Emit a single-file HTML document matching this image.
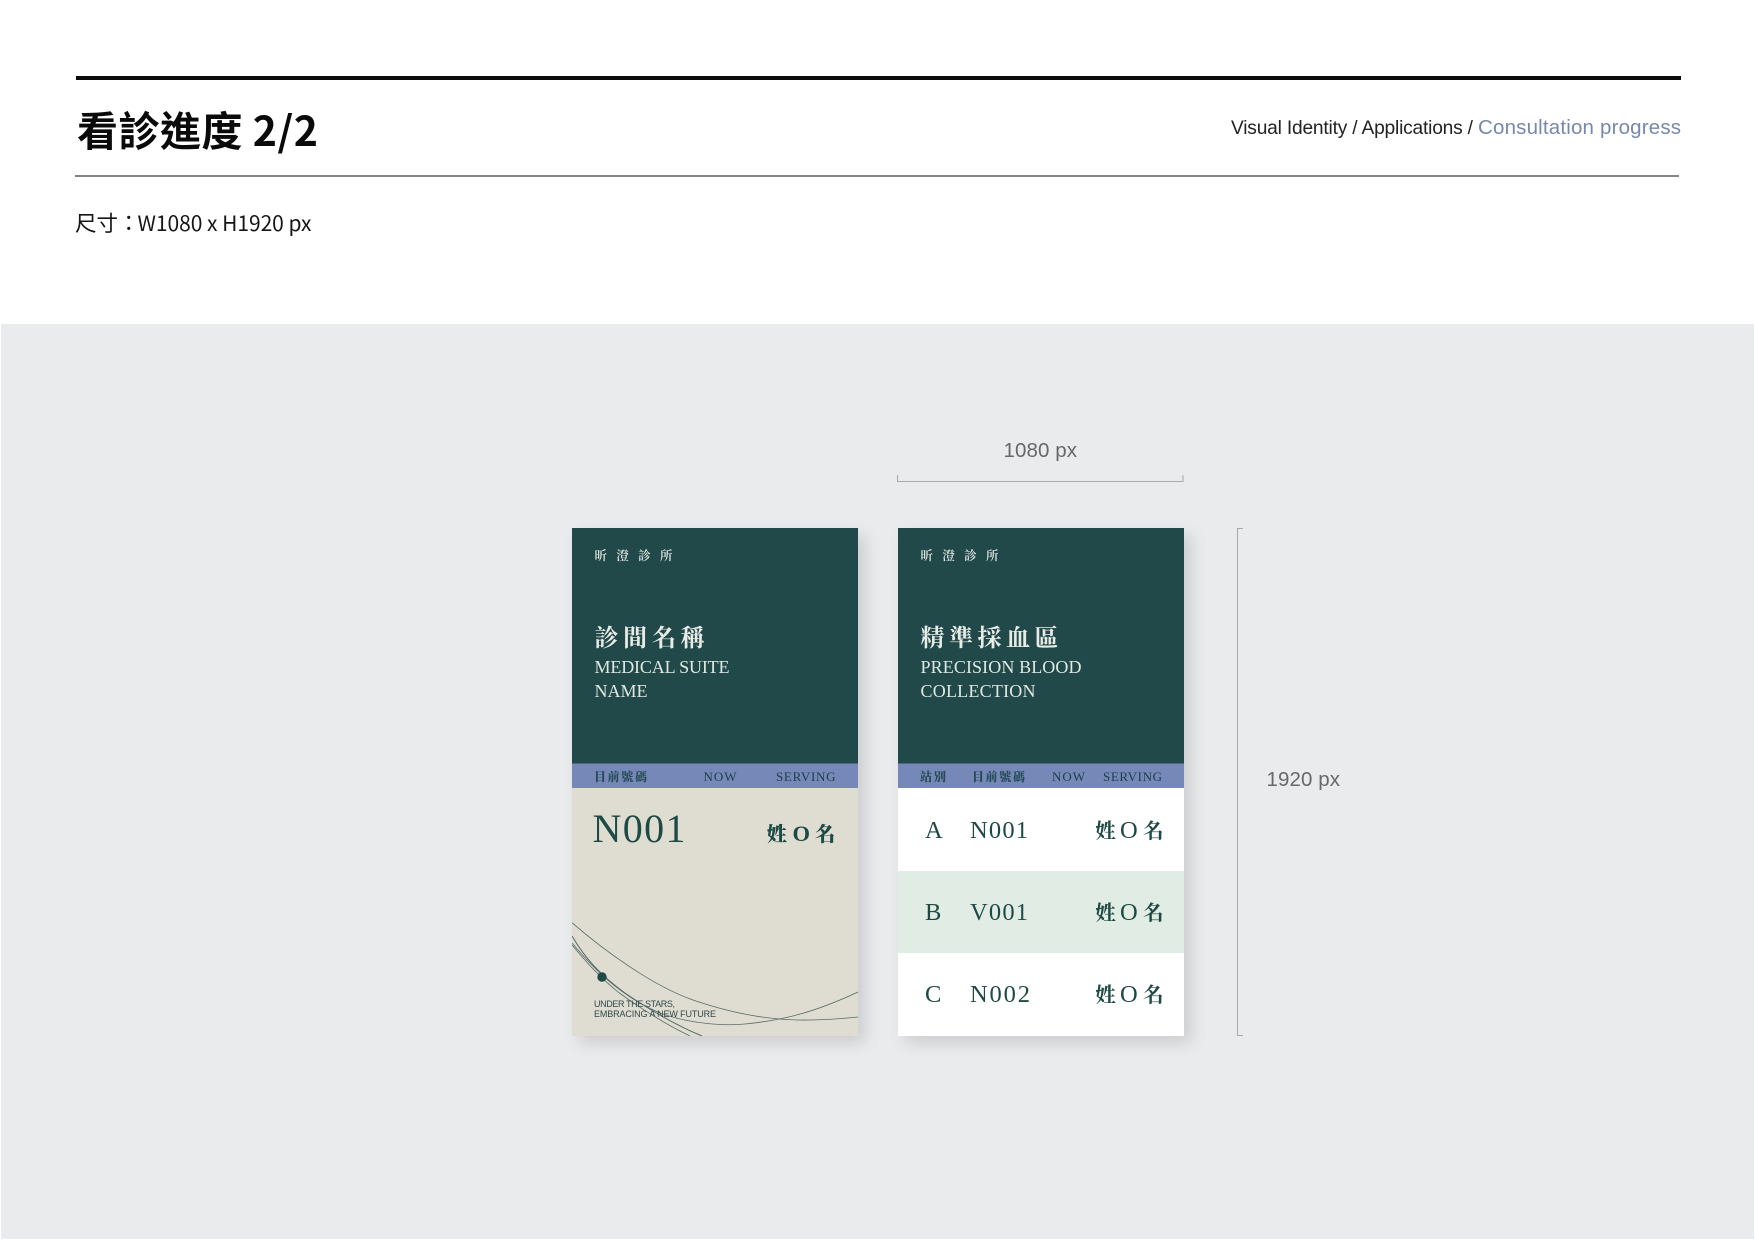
<!DOCTYPE html>
<html lang="zh-Hant"><head><meta charset="utf-8"><title>看診進度 2/2</title>
<style>
html,body{margin:0;padding:0;background:#fff}
body{position:relative;width:1755px;height:1241px;overflow:hidden}
.a{position:absolute}
svg{position:absolute;left:0;top:0}
.s{font-family:"Liberation Serif","Noto Serif CJK TC","Noto Serif CJK SC",serif}
.c{font-family:"Noto Serif CJK TC","Noto Serif CJK SC","Liberation Serif",serif}
.h{font-family:"Liberation Sans",Arial,sans-serif}
.n{font-family:"Noto Sans CJK TC","Noto Sans CJK SC","Liberation Sans",sans-serif}
</style></head><body>
<div class="a" style="left:76px;top:75.500px;width:1605px;height:4.500px;background:#0b0b0b"></div>
<div class="a" style="left:75px;top:175px;width:1604px;height:2px;background:#858585"></div>
<div class="a" style="left:1px;top:324px;width:1753px;height:915px;background:#eaebed"></div>
<div class="a" style="left:572px;top:528px;width:286px;height:508px;background:#dfddd1;box-shadow:7px 7px 15px rgba(0,0,0,.13)"></div>
<div class="a" style="left:898px;top:528px;width:286px;height:508px;background:#fff;box-shadow:7px 7px 15px rgba(0,0,0,.13)"></div>
<svg width="1755" height="1241" viewBox="0 0 1755 1241">
<defs><clipPath id="k"><rect x="572" y="528" width="286" height="508"/></clipPath></defs>
<text class="n" x="77" y="146" font-size="41" font-weight="700" fill="#0a0a0a" textLength="241">看診進度 2/2</text>
<text class="n" x="75" y="231" font-size="21.500" fill="#161616">尺寸：</text>
<text class="n" x="137.500" y="231" font-size="21" fill="#161616" textLength="174">W1080 x H1920 px</text>
<text class="h" x="1231" y="134" font-size="19.200" fill="#222" textLength="242">Visual Identity / Applications /</text>
<text class="h" x="1478" y="134" font-size="20.500" fill="#7888ad" textLength="203">Consultation progress</text>

<path d="M897.500 475V481.500H1183V475" fill="none" stroke="#a9a9ad" stroke-width="1"/>
<text class="h" x="1003.500" y="457" font-size="20.500" fill="#68686a" textLength="73.500">1080 px</text>
<path d="M1243 528.500H1237.500V1035.500H1243" fill="none" stroke="#a9a9ad" stroke-width="1"/>
<text class="h" x="1266.500" y="786" font-size="20.500" fill="#68686a" textLength="73.500">1920 px</text>

<!-- card 1 -->
<rect x="572" y="528" width="286" height="236" fill="#214949"/>
<rect x="572" y="763.500" width="286" height="24.500" fill="#7588b7"/>
<text class="c" x="594.500" y="560" font-size="12.500" font-weight="600" fill="#e6ebe6" textLength="78">昕澄診所</text>
<text class="c" x="594.500" y="646" font-size="24" font-weight="700" fill="#e8ebe6" textLength="110">診間名稱</text>
<text class="s" x="594.500" y="673" font-size="18" fill="#dfe8e2" textLength="135">MEDICAL SUITE</text>
<text class="s" x="594.500" y="697" font-size="18" fill="#dfe8e2" textLength="53">NAME</text>
<text class="c" x="594" y="781" font-size="12" font-weight="800" fill="#264c57" textLength="53">目前號碼</text>
<text class="s" x="703.500" y="781" font-size="13" fill="#1c3f4a" textLength="33">NOW</text>
<text class="s" x="776" y="781" font-size="13" fill="#1c3f4a" textLength="59.500">SERVING</text>
<text class="s" x="592.500" y="842" font-size="40" fill="#1d4a44" textLength="93">N001</text>
<text class="c" x="767" y="841" font-size="20" font-weight="800" fill="#1d4a44">姓</text>
<text class="s" x="792.500" y="841" font-size="22.500" font-weight="700" fill="#1d4a44">O</text>
<text class="c" x="815" y="841" font-size="20" font-weight="800" fill="#1d4a44">名</text>
<g clip-path="url(#k)" fill="none" stroke="#5a6c68" stroke-width=".8">
<path d="M572 922.700C600 947 650 985 693 1000C725 1011 755 1017 780 1019C800 1021 830 1020 858 1017"/>
<path d="M572 943C595 970 620 996 660 1013C690 1024 725 1026 745 1024C785 1020 815 1012 858 992"/>
<path d="M572 936C585 958 600 975 625 993C650 1010 675 1025 702 1036" stroke-width="1"/>
<path d="M572 945C585 960 595 973 618 992C640 1008 665 1024 690 1036"/>
</g>
<circle cx="602" cy="977" r="4.700" fill="#1d4a44"/>
<text class="h" x="594" y="1007" font-size="9" fill="#33474a" textLength="81">UNDER THE STARS,</text>
<text class="h" x="594" y="1017" font-size="9" fill="#33474a" textLength="122">EMBRACING A NEW FUTURE</text>

<!-- card 2 -->
<rect x="898" y="528" width="286" height="236" fill="#214949"/>
<rect x="898" y="763.500" width="286" height="24.500" fill="#7588b7"/>
<rect x="898" y="871" width="286" height="82" fill="#e0ece4"/>
<text class="c" x="920.500" y="560" font-size="12.500" font-weight="600" fill="#e6ebe6" textLength="78">昕澄診所</text>
<text class="c" x="920.500" y="646" font-size="24" font-weight="700" fill="#e8ebe6" textLength="138">精準採血區</text>
<text class="s" x="920.500" y="673" font-size="18" fill="#dfe8e2" textLength="161">PRECISION BLOOD</text>
<text class="s" x="920.500" y="697" font-size="18" fill="#dfe8e2" textLength="115">COLLECTION</text>
<text class="c" x="920" y="781" font-size="12" font-weight="800" fill="#264c57" textLength="26">站別</text>
<text class="c" x="972" y="781" font-size="12" font-weight="800" fill="#264c57" textLength="53">目前號碼</text>
<text class="s" x="1052" y="781" font-size="13" fill="#1c3f4a" textLength="33">NOW</text>
<text class="s" x="1103" y="781" font-size="13" fill="#1c3f4a" textLength="59">SERVING</text>
<g class="s" font-size="24.500" fill="#1f4a44">
<text x="925" y="838" textLength="18">A</text><text x="970" y="838" textLength="58">N001</text>
<text x="925" y="920" textLength="15">B</text><text x="970" y="920" textLength="58">V001</text>
<text x="925" y="1002" textLength="17">C</text><text x="970" y="1002" textLength="60">N002</text>
<text x="1120" y="838">O</text><text x="1120" y="920">O</text><text x="1120" y="1002">O</text>
</g>
<g class="c" font-size="20.500" font-weight="700" fill="#1f4a44">
<text x="1095.500" y="838">姓</text><text x="1143" y="838">名</text>
<text x="1095.500" y="920">姓</text><text x="1143" y="920">名</text>
<text x="1095.500" y="1002">姓</text><text x="1143" y="1002">名</text>
</g>
</svg>
</body></html>
